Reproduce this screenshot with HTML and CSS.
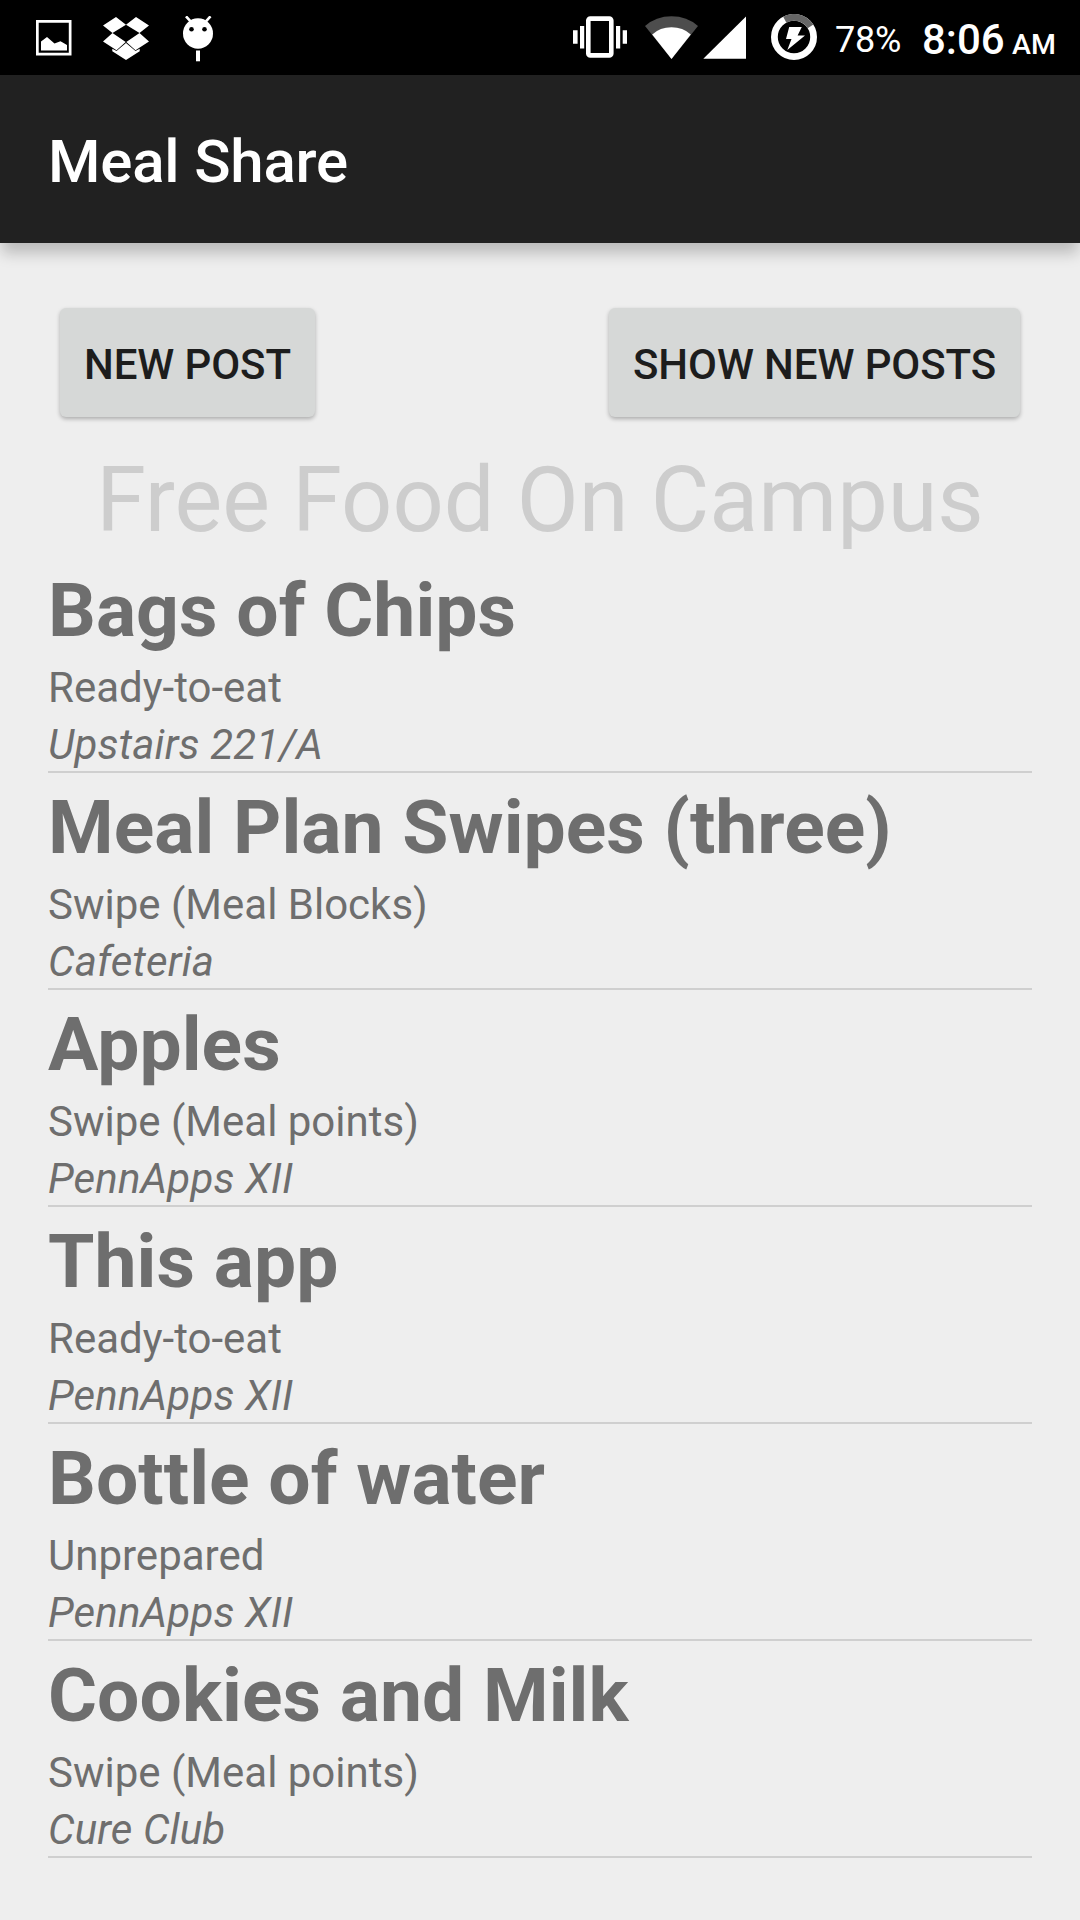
FILE: index.html
```html
<!DOCTYPE html>
<html lang="en">
<head>
<meta charset="utf-8">
<title>Meal Share</title>
<link rel="stylesheet" href="styles.css">
</head>
<body>
<header class="status">
<div class="notices">
<svg class="icon icon-photo" width="36" height="36" viewBox="36 20 36 36"><path fill="#fff" fill-rule="evenodd" d="M36 20H71.500V55.500H36ZM38.700 22.700V52.800H68.800V22.700ZM41 50.500V41.500L47 37L54.500 43.500L60.500 41.300L67 45V50.500Z"/></svg>
<svg class="icon icon-box" width="46" height="44" viewBox="103 17 46 44"><path fill="#fff" d="M116 17L126 24.700L112.500 33L103 25.500ZM136 17L149 25.500L139.500 33L126 24.700ZM112.500 33L125.700 42L116.500 50.300L103 41.500ZM139.500 33L149 41.500L135.500 50.300L126.300 42ZM126 43L135.500 51L139.700 48.800V51.200L126 60L112.300 51.200V48.800L116.500 51Z"/></svg>
<svg class="icon icon-droid" width="30" height="46" viewBox="183 16 30 46"><ellipse cx="198" cy="33.500" rx="15" ry="15.300" fill="#fff"/><path d="M186 16.300L191 21.800M210.500 16.300L205.500 21.800" stroke="#fff" stroke-width="2.600"/><path d="M196 50.500H200V61.300H196Z" fill="#fff"/><circle cx="191.500" cy="29.300" r="2.300"/><circle cx="204.500" cy="29.300" r="2.300"/></svg>
</div>
<div class="system">
<svg class="icon icon-vibrate" width="54" height="42" viewBox="573 16 54 42"><rect x="588.300" y="18.600" width="23" height="36.800" rx="2" fill="none" stroke="#fff" stroke-width="4.600"/><path fill="#fff" d="M573 30.300H577.600V43.800H573ZM580 26H584.200V48.500H580ZM616 26H620.200V48.500H616ZM622.700 30.300H627V43.800H622.700Z"/></svg>
<svg class="icon icon-wifi" width="54" height="43" viewBox="645 16 54 43"><path fill="#4d4d4d" d="M645 26Q656 16.300 671.500 16.300T698 26L671.500 59Z"/><path fill="#fff" d="M652.200 34.500Q660 27.300 671.500 27.300T690.800 34.500L671.500 59Z"/></svg>
<svg class="icon icon-signal" width="43" height="43" viewBox="703 16 43 43"><path fill="#fff" d="M746 16.500V58.800H703.300Z"/></svg>
<svg class="icon icon-charge" width="46" height="46" viewBox="771 14 46 46"><circle cx="794" cy="37" r="19.600" fill="none" stroke="#fff" stroke-width="6.800"/><path d="M784.800 19.700A19.600 19.600 0 0 1 810.500 26.400" fill="none" stroke="#666" stroke-width="6.800"/><path fill="#fff" d="M789.200 27H801.800L797.600 35.500H805L787.300 50L791.500 39H786Z"/></svg>
<span class="battery">78%</span><time class="clock">8:06</time><span class="meridiem">AM</span></div>
</header>
<div class="toolbar"><h1 class="app-title">Meal Share</h1></div>
<main class="content">
<div class="actions"><button class="button">NEW POST</button><button class="button">SHOW NEW POSTS</button></div>
<h2 class="heading">Free Food On Campus</h2>
<ul class="posts">
<li class="post"><h3 class="name">Bags of Chips</h3><p class="kind">Ready-to-eat</p><p class="place">Upstairs 221/A</p></li>
<li class="post"><h3 class="name">Meal Plan Swipes (three)</h3><p class="kind">Swipe (Meal Blocks)</p><p class="place">Cafeteria</p></li>
<li class="post"><h3 class="name">Apples</h3><p class="kind">Swipe (Meal points)</p><p class="place">PennApps XII</p></li>
<li class="post"><h3 class="name">This app</h3><p class="kind">Ready-to-eat</p><p class="place">PennApps XII</p></li>
<li class="post"><h3 class="name">Bottle of water</h3><p class="kind">Unprepared</p><p class="place">PennApps XII</p></li>
<li class="post"><h3 class="name">Cookies and Milk</h3><p class="kind">Swipe (Meal points)</p><p class="place">Cure Club</p></li>
</ul>
</main>
</body>
</html>
```

FILE: styles.css
```css
* { box-sizing: border-box; }
body {
  margin: 0;
  width: 1080px;
  height: 1920px;
  overflow: hidden;
  background: #eee;
  color: #6e6e6e;
  font-family: Roboto, sans-serif;
}
h1, h2, h3, p, ul { margin: 0; padding: 0; }

/* Status bar */
.status {
  display: flex;
  justify-content: space-between;
  height: 75px;
  padding: 0 24px 0 36px;
  background: #000;
  color: #fff;
}
.notices, .system { display: flex; align-items: flex-start; }
.icon { display: block; flex: none; }
.icon-photo { margin: 20px 31px 0 0; }
.icon-box { margin: 17px 34px 0 0; }
.icon-droid { margin-top: 16px; }
.icon-vibrate { margin: 16px 18px 0 0; }
.icon-wifi { margin: 16px 4px 0 0; }
.icon-signal { margin: 16px 25px 0 0; }
.icon-charge { margin: 14px 18px 0 0; }
.battery { width: 87px; font-size: 36px; line-height: 80px; letter-spacing: -.2px; }
.clock { width: 90px; font-size: 42px; font-weight: 500; line-height: 80px; }
.meridiem { width: 44px; font-size: 28.500px; font-weight: 500; line-height: 89px; }

/* App bar */
.toolbar {
  display: flex;
  align-items: center;
  height: 168px;
  padding: 4px 48px 0;
  background: #212121;
  color: #fff;
  box-shadow: 0 12px 14px -2px rgba(0, 0, 0, .22);
}
.app-title { font-size: 60px; font-weight: 500; letter-spacing: -.2px; }

.content { padding: 48px 48px 0; }
.actions { display: flex; justify-content: space-between; height: 144px; padding: 17px 12px 0; }
.button {
  height: 109px;
  padding: 3px 24px 0;
  border: 0;
  border-radius: 6px;
  background: #d6d8d7;
  color: #1d1d1d;
  font: 500 42px Roboto, sans-serif;
  letter-spacing: -.1px;
  box-shadow: 0 2px 4px rgba(0, 0, 0, .28);
}
.heading {
  height: 121px;
  padding-top: 10px;
  color: #cdcdcd;
  font-size: 90px;
  font-weight: 400;
  line-height: 112px;
  text-align: center;
}

/* Post list */
.posts { list-style: none; }
.post { height: 217px; padding-top: 5px; border-bottom: 2px solid #cfcfcf; }
.name { font-size: 75px; line-height: 99px; letter-spacing: .05px; }
.kind { font-size: 42px; line-height: 56px; }
.place { margin-top: 2px; font-size: 42px; font-style: italic; line-height: 53px; letter-spacing: .15px; }
```
